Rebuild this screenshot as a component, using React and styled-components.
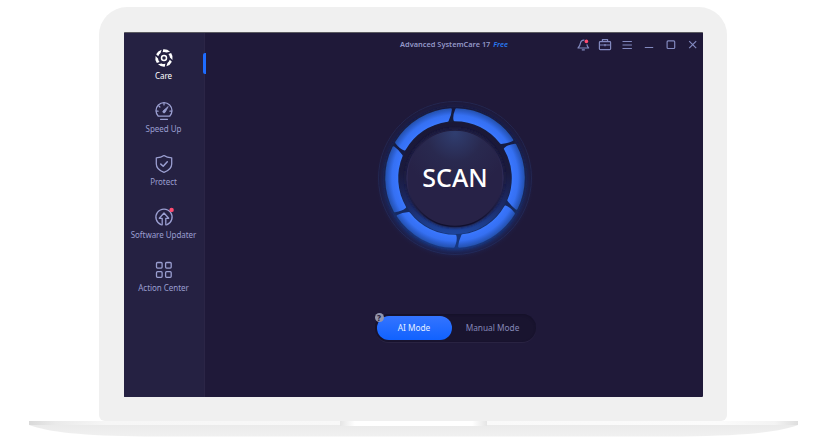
import React from "react";
import styled, { createGlobalStyle } from "styled-components";

const GlobalStyle = createGlobalStyle`
  * { box-sizing: border-box; }
  body { margin: 0; background: #fff; font-family: "Noto Sans", "Open Sans", sans-serif; overflow: hidden; }
  button { border: 0; padding: 0; margin: 0; background: none; font: inherit; color: inherit; }
`;

const Page = styled.main`
  width: 827px;
  height: 443px;
  padding-top: 7px;
  background: #fff;
`;

const Laptop = styled.div`
  width: 628px;
  height: 414px;
  margin-left: 99px;
  padding: 25px 24px 24px 25px;
  background: #f0f0f0;
  border-radius: 28px 28px 6px 6px;
`;

const Screen = styled.div`
  width: 579px;
  height: 365px;
  display: grid;
  grid-template-columns: 81px 1fr;
  background: #1f1939;
  border-top: 1px solid #5b5b61;
  border-radius: 1px;
  overflow: hidden;
`;

const Sidebar = styled.nav`
  display: flex;
  flex-direction: column;
  background: #252142;
  border-right: 1px solid #2b2546;
  padding-top: 15px;
`;

const NavItem = styled.button`
  position: relative;
  height: 53px;
  width: 79px;
  display: flex;
  flex-direction: column;
  align-items: center;
  color: ${(p) => (p.$active ? "#fff" : "#9a9ed0")};

  &::after {
    content: "";
    display: ${(p) => (p.$active ? "block" : "none")};
    position: absolute;
    right: -3px;
    top: 5px;
    width: 3px;
    height: 21px;
    border-radius: 2px 0 0 2px;
    background: #1e6cff;
  }
`;

const NavIcon = styled.svg`
  width: 20px;
  height: 20px;
  fill: none;
  stroke: currentColor;
  stroke-width: 1.3;
  stroke-linecap: round;
  stroke-linejoin: round;
`;

const NavLabel = styled.span`
  margin-top: 2px;
  font-size: 8px;
  line-height: 11px;
  white-space: nowrap;
  letter-spacing: -0.04px;
`;

const Main = styled.section`
  display: flex;
  flex-direction: column;
  align-items: center;
`;

const TitleBar = styled.header`
  width: 100%;
  height: 23px;
  display: grid;
  grid-template-columns: 1fr 110px 1fr;
  align-items: start;
`;

const Title = styled.h1`
  grid-column: 2;
  margin: 6px 0 0;
  font-size: 7.4px;
  line-height: 10px;
  font-weight: 600;
  color: #9498c8;
  white-space: nowrap;
  text-align: center;

  em { color: #2878f0; margin-left: 1px; }
`;

const WindowTools = styled.div`
  display: flex;
  justify-content: flex-end;
  gap: 8px;
  padding: 5px 3px 0 0;
`;

const ToolIcon = styled.svg`
  width: 14px;
  height: 14px;
  fill: none;
  stroke: #8289bf;
  stroke-width: 1.2;
  stroke-linejoin: round;
`;

const ScanButton = styled.button`
  width: 170px;
  height: 170px;
  margin-top: 37px;
  margin-left: 2px;
  display: grid;
  place-items: center;

  > * { grid-area: 1 / 1; }
`;

const Dial = styled.svg`
  width: 170px;
  height: 170px;
`;

const ScanLabel = styled.span`
  z-index: 1;
  margin-bottom: 2px;
  color: #fff;
  font-size: 25px;
  line-height: 28px;
  font-weight: 500;
`;

const ModeSwitch = styled.div`
  position: relative;
  width: 161px;
  height: 28px;
  margin-top: 51px;
  margin-left: 2px;
  padding: 2px;
  display: grid;
  grid-template-columns: 75px 1fr;
  border-radius: 14px;
  background: #19142f;
  box-shadow: inset 0 1px 2px #151129, 0 1px 0 #292342;
`;

const Mode = styled.button`
  height: 24px;
  border-radius: 12px;
  font-size: 8.3px;
  line-height: 24px;
  color: ${(p) => (p.$active ? "#e5efff" : "#8588b8")};
  background: ${(p) => (p.$active ? "linear-gradient(#3474ff, #1062ff)" : "transparent")};
`;

const Help = styled.span`
  position: absolute;
  left: 0;
  top: -1px;
  width: 9px;
  height: 9px;
  border-radius: 50%;
  background: #9295ad;
  color: #211b3c;
  font-size: 8px;
  line-height: 9px;
  font-weight: 800;
  text-align: center;
`;

const Base = styled.svg`
  display: block;
  width: 827px;
  height: 20px;
`;

const polar = (r, degrees, c = 85) => {
  const a = (degrees * Math.PI) / 180;
  return `${(c + r * Math.cos(a)).toFixed(2)} ${(c + r * Math.sin(a)).toFixed(2)}`;
};

const segmentPath = (start) =>
  `M${polar(68.6, start + 2.2)} A68.6 68.6 0 0 1 ${polar(68.6, start + 57.4)} ` +
  `Q${polar(64, start + 56.8)} ${polar(58, start + 53.6)} A58 58 0 0 0 ${polar(58, start + 0.7)} ` +
  `Q${polar(62, start - 0.2)} ${polar(68.6, start + 2.2)}Z`;

const bladePath = (s) =>
  `M${polar(8.7, s, 10)} A8.7 8.7 0 0 1 ${polar(8.7, s + 49, 10)} ` +
  `L${polar(6, s + 30, 10)} A6 6 0 0 0 ${polar(6, s - 8, 10)}Z`;

const slots = [0, 1, 2, 3, 4, 5];

const CareIcon = () => (
  <NavIcon viewBox="0 0 20 20">
    {slots.map((k) => <path key={k} d={bladePath(k * 60 + 25)} fill="currentColor" stroke="none" />)}
    <circle cx="10" cy="10" r="2.5" strokeWidth="1.5" />
  </NavIcon>
);

const SpeedIcon = () => (
  <NavIcon viewBox="0 0 20 20">
    <path d="M4.3 15.2A8 8 0 1 1 15.7 15.2Z" />
    <path d="M10 2.2v1.8M4.9 5l1 1M2.4 10.2h1.7M17.6 10.2h-1.7M6.5 18.3h7" strokeWidth="1.2" />
    <path d="M13.9 5.8 9 10.1a1.2 1.2 0 0 0 1.7 1.6Z" fill="currentColor" strokeWidth="0.9" />
  </NavIcon>
);

const ShieldIcon = () => (
  <NavIcon viewBox="0 0 20 20">
    <path d="M10 1.6C8 3.2 5.2 3.8 2.3 3.8v6.1c0 4 3.3 6.7 7.7 8.4 4.4-1.7 7.7-4.4 7.7-8.4V3.8C14.8 3.8 12 3.2 10 1.6Z" />
    <path d="m6.8 10.1 2.4 2.2 4.1-4.5" strokeWidth="1.5" />
  </NavIcon>
);

const UpdateIcon = () => (
  <NavIcon viewBox="0 0 20 20">
    <path d="M7.4 17.8A8.1 8.1 0 1 1 12.6 17.8" />
    <path d="M8.2 17.8v-6.5H5.3L10 6l4.7 5.3h-2.9v6.5" />
    <circle cx="17.6" cy="2.9" r="2.2" fill="#ff4c70" stroke="none" />
  </NavIcon>
);

const GridIcon = () => (
  <NavIcon viewBox="0 0 20 20">
    <rect x="2.5" y="2.5" width="5.6" height="5.6" rx="1" />
    <rect x="11.6" y="2.5" width="5.6" height="5.6" rx="1" />
    <rect x="2.5" y="11.7" width="5.6" height="5.6" rx="1" />
    <rect x="11.6" y="11.7" width="5.6" height="5.6" rx="1" />
  </NavIcon>
);

const navItems = [
  { label: "Care", Icon: CareIcon, active: true },
  { label: "Speed Up", Icon: SpeedIcon },
  { label: "Protect", Icon: ShieldIcon },
  { label: "Software Updater", Icon: UpdateIcon },
  { label: "Action Center", Icon: GridIcon },
];

const ScanDial = () => (
  <Dial viewBox="0 0 170 170">
    <defs>
      <radialGradient id="halo" gradientUnits="userSpaceOnUse" cx="85" cy="87.5" r="80">
        <stop offset="0.82" stopColor="#1b4bb0" stopOpacity="0.75" />
        <stop offset="0.91" stopColor="#1c3b8c" stopOpacity="0.25" />
        <stop offset="1" stopColor="#1f1939" stopOpacity="0" />
      </radialGradient>
      <linearGradient id="gap" x1="0" y1="0" x2="0" y2="1">
        <stop offset="0" stopColor="#191938" />
        <stop offset="0.6" stopColor="#182350" />
        <stop offset="1" stopColor="#193a86" />
      </linearGradient>
      <linearGradient id="groove" x1="0" y1="0" x2="0" y2="1">
        <stop offset="0" stopColor="#1a1735" />
        <stop offset="0.45" stopColor="#1b1a3d" />
        <stop offset="0.75" stopColor="#1c2a66" />
        <stop offset="1" stopColor="#1d469f" />
      </linearGradient>
      <radialGradient id="segment" gradientUnits="userSpaceOnUse" cx="85" cy="85" r="70">
        <stop offset="0.8" stopColor="#3d7cfc" />
        <stop offset="0.84" stopColor="#3874fb" />
        <stop offset="0.9" stopColor="#3570f2" />
        <stop offset="0.95" stopColor="#2b5ecf" />
        <stop offset="1" stopColor="#2350aa" />
      </radialGradient>
      <radialGradient id="knob" gradientUnits="userSpaceOnUse" cx="85" cy="40" r="57">
        <stop offset="0" stopColor="#303e70" />
        <stop offset="0.5" stopColor="#29294f" />
        <stop offset="1" stopColor="#272247" />
      </radialGradient>
      <linearGradient id="knobEdge" x1="0" y1="0" x2="0" y2="1">
        <stop offset="0" stopColor="#1f1c3d" />
        <stop offset="0.5" stopColor="#302c59" />
        <stop offset="1" stopColor="#100f2b" />
      </linearGradient>
      <filter id="soft" x="-10%" y="-10%" width="120%" height="120%">
        <feGaussianBlur stdDeviation="1.1" />
      </filter>
    </defs>
    <circle cx="85" cy="85" r="76.5" fill="#1d193b" fillOpacity="0.7" stroke="#262b55" strokeWidth="0.8" />
    <circle cx="85" cy="87.5" r="80" fill="url(#halo)" />
    <circle cx="85" cy="85" r="71" fill="url(#gap)" filter="url(#soft)" />
    {slots.map((k) => (
      <path key={k} d={segmentPath(k * 60 + 29)} fill="url(#segment)" stroke="url(#segment)" strokeWidth="2.4" strokeLinejoin="round" />
    ))}
    <circle cx="85" cy="85" r="56" fill="url(#groove)" />
    <circle cx="85" cy="85" r="50" fill="#1c1c42" filter="url(#soft)" />
    <circle cx="85" cy="85.3" r="48" fill="url(#knob)" stroke="url(#knobEdge)" strokeWidth="1.1" />
  </Dial>
);

export default function App() {
  return (
    <Page>
      <GlobalStyle />
      <Laptop>
        <Screen>
          <Sidebar>
            {navItems.map(({ label, Icon, active }) => (
              <NavItem key={label} $active={active}>
                <Icon />
                <NavLabel>{label}</NavLabel>
              </NavItem>
            ))}
          </Sidebar>
          <Main>
            <TitleBar>
              <Title>Advanced SystemCare 17 <em>Free</em></Title>
              <WindowTools>
                <ToolIcon viewBox="0 0 14 14">
                  <path d="M8.4 2.1C5.6 1.9 4.7 3.3 4.3 5.6 4 7.7 3.3 8.4 2 10h10.6c-1-1.2-1.5-2-1.7-3.6M5.8 11.8h3" />
                  <circle cx="10.4" cy="3.4" r="1.8" fill="#ff4c70" stroke="none" />
                </ToolIcon>
                <ToolIcon viewBox="0 0 14 14">
                  <rect x="1.4" y="3.6" width="11.2" height="8" rx="0.8" />
                  <path d="M4.4 3.6V1.6h5.2v2M1.5 7h11M7 6v2.3" />
                </ToolIcon>
                <ToolIcon viewBox="0 0 14 14"><path d="M2.5 3.5h9.4M2.5 7h9.4M2.5 10.5h9.4" /></ToolIcon>
                <ToolIcon viewBox="0 0 14 14"><path d="M2.8 9.5h8.4" /></ToolIcon>
                <ToolIcon viewBox="0 0 14 14"><rect x="3.1" y="2.9" width="7.6" height="7.6" rx="1" /></ToolIcon>
                <ToolIcon viewBox="0 0 14 14"><path d="m3.2 3.2 7 7m0-7-7 7" /></ToolIcon>
              </WindowTools>
            </TitleBar>
            <ScanButton>
              <ScanDial />
              <ScanLabel>SCAN</ScanLabel>
            </ScanButton>
            <ModeSwitch>
              <Mode $active>AI Mode</Mode>
              <Mode>Manual Mode</Mode>
              <Help>?</Help>
            </ModeSwitch>
          </Main>
        </Screen>
      </Laptop>
      <Base viewBox="0 0 827 20">
        <defs>
          <linearGradient id="lip" x1="0" y1="0" x2="1" y2="0">
            <stop offset="0" stopColor="#d9d9d9" />
            <stop offset="0.035" stopColor="#eaeaea" />
            <stop offset="0.1" stopColor="#f6f6f6" />
            <stop offset="0.9" stopColor="#fbfbfb" />
            <stop offset="0.97" stopColor="#f3f3f3" />
            <stop offset="1" stopColor="#dedede" />
          </linearGradient>
          <linearGradient id="notch" x1="0" y1="0" x2="1" y2="0">
            <stop offset="0" stopColor="#e5e5e5" />
            <stop offset="0.1" stopColor="#fff" />
            <stop offset="0.9" stopColor="#fff" />
            <stop offset="1" stopColor="#e5e5e5" />
          </linearGradient>
          <linearGradient id="underside" x1="0" y1="0" x2="0" y2="1">
            <stop offset="0" stopColor="#ebebeb" />
            <stop offset="1" stopColor="#f0f0f0" />
          </linearGradient>
        </defs>
        <path d="M29 4C48 11 83 15 145 15.4H682C744 15 779 11 798 4Z" fill="url(#underside)" />
        <rect x="29" y="0" width="769" height="4" fill="url(#lip)" />
        <rect x="340" y="0" width="147" height="5" fill="url(#notch)" />
      </Base>
    </Page>
  );
}
